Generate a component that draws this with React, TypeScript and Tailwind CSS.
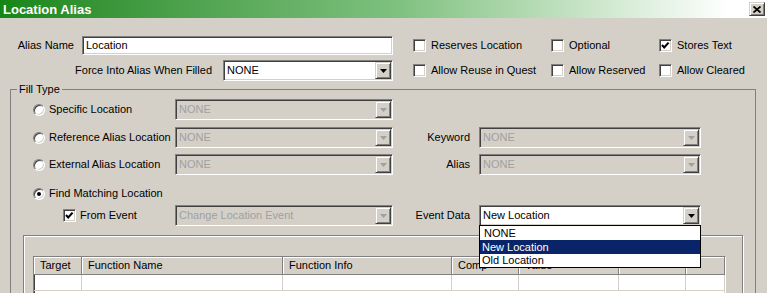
import React from 'react';

const sunken =
  'border border-t-[#808080] border-l-[#808080] border-r-white border-b-white shadow-[inset_1px_1px_0_#404040,inset_-1px_-1px_0_#d4d0c8]';
const raised =
  'border border-t-[#d4d0c8] border-l-[#d4d0c8] border-r-[#404040] border-b-[#404040] shadow-[inset_1px_1px_0_#ffffff,inset_-1px_-1px_0_#808080]';

const Check = ({ checked }: { checked?: boolean }) => (
  <span className={`w-[13px] h-[13px] shrink-0 bg-white flex items-center justify-center ${sunken}`}>
    {checked && (
      <svg width="9" height="9" viewBox="0 0 9 9">
        <polyline points="1,4 3.2,6.4 7.6,1.6" fill="none" stroke="#000" strokeWidth="2.1" />
      </svg>
    )}
  </span>
);

const CheckItem = ({ label, checked, className = '' }: { label: string; checked?: boolean; className?: string }) => (
  <div className={`flex items-center gap-[5px] ${className}`}>
    <Check checked={checked} />
    <span>{label}</span>
  </div>
);

const Radio = ({ checked }: { checked?: boolean }) => (
  <span className="w-[12px] h-[12px] shrink-0 rounded-full bg-white flex items-center justify-center border border-t-[#808080] border-l-[#808080] border-r-white border-b-white shadow-[inset_1px_1px_0_#404040,inset_-1px_-1px_0_#d4d0c8]">
    {checked && <span className="w-[4px] h-[4px] rounded-full bg-black" />}
  </span>
);

const Arrow = ({ disabled }: { disabled?: boolean }) => (
  <div className={`w-[16px] h-full shrink-0 bg-[#d4d0c8] flex items-center justify-center ${raised}`}>
    <svg width="7" height="4" viewBox="0 0 7 4">
      <polygon points="0,0 7,0 3.5,4" fill={disabled ? '#a0a0a0' : '#000'} />
    </svg>
  </div>
);

const Combo = ({ value, disabled, className = '' }: { value: string; disabled?: boolean; className?: string }) => (
  <div className={`flex h-[21px] p-[1px] ${sunken} ${disabled ? 'bg-[#d4d0c8] text-[#a0a0a0]' : 'bg-white'} ${className}`}>
    <div className="flex-1 flex items-center pl-[2px]">{value}</div>
    <Arrow disabled={disabled} />
  </div>
);

const cols = [
  { name: 'Target', w: 'w-[48px]' },
  { name: 'Function Name', w: 'w-[201px]' },
  { name: 'Function Info', w: 'w-[169px]' },
  { name: 'Comp', w: 'w-[67px]' },
  { name: 'Value', w: 'w-[100px]' },
  { name: '', w: 'w-[67px]' },
  { name: '', w: 'flex-1' },
];

export default function App() {
  return (
    <div className="w-[767px] h-[293px] overflow-hidden bg-[#d4d0c8] font-['Liberation_Sans',Arial,sans-serif] text-[11px] leading-none text-black flex flex-col">
      {/* title bar */}
      <div className="h-[18px] shrink-0 flex items-center justify-between pl-[3px] pr-[2px] bg-linear-to-r from-[#138616] via-[#7fc180] via-52% to-white to-95%">
        <span className="text-white font-bold text-[13px]">Location Alias</span>
        <div className={`w-[16px] h-[14px] bg-[#d4d0c8] flex items-center justify-center ${raised}`}>
          <svg width="8" height="7" viewBox="0 0 8 7">
            <path d="M0.5 0.5 L7.5 6.5 M7.5 0.5 L0.5 6.5" stroke="#000" strokeWidth="1.8" />
          </svg>
        </div>
      </div>

      {/* alias name row */}
      <div className="mt-[18px] h-[19px] flex items-center shrink-0">
        <span className="w-[74px] text-right">Alias Name</span>
        <div className={`ml-[8px] w-[311px] h-full bg-white flex items-center pl-[3px] ${sunken}`}>Location</div>
        <CheckItem className="ml-[20px] w-[138px]" label="Reserves Location" />
        <CheckItem className="w-[108px]" label="Optional" />
        <CheckItem label="Stores Text" checked />
      </div>

      {/* force into row */}
      <div className="mt-[5px] h-[21px] flex items-center shrink-0">
        <span className="w-[212px] text-right">Force Into Alias When Filled</span>
        <Combo className="ml-[11px] w-[170px]" value="NONE" />
        <CheckItem className="ml-[20px] w-[138px]" label="Allow Reuse in Quest" />
        <CheckItem className="w-[108px]" label="Allow Reserved" />
        <CheckItem label="Allow Cleared" />
      </div>

      {/* fill type */}
      <fieldset className="mt-[2px] ml-[10px] w-[746px] border border-[#808080] pt-[3px] flex-1">
        <legend className="ml-[6px] px-[2px] h-[13px] leading-[13px]">Fill Type</legend>

        <div className="h-[21px] flex items-center pl-[22px]">
          <div className="w-[142px] flex items-center gap-[4px]">
            <Radio />
            <span>Specific Location</span>
          </div>
          <Combo className="w-[218px]" value="NONE" disabled />
        </div>

        <div className="mt-[7px] h-[21px] flex items-center pl-[22px]">
          <div className="w-[142px] flex items-center gap-[4px]">
            <Radio />
            <span>Reference Alias Location</span>
          </div>
          <Combo className="w-[218px]" value="NONE" disabled />
          <span className="w-[77px] text-right">Keyword</span>
          <Combo className="ml-[9px] w-[222px]" value="NONE" disabled />
        </div>

        <div className="mt-[6px] h-[21px] flex items-center pl-[22px]">
          <div className="w-[142px] flex items-center gap-[4px]">
            <Radio />
            <span>External Alias Location</span>
          </div>
          <Combo className="w-[218px]" value="NONE" disabled />
          <span className="w-[77px] text-right">Alias</span>
          <Combo className="ml-[9px] w-[222px]" value="NONE" disabled />
        </div>

        <div className="mt-[8px] h-[21px] flex items-center pl-[22px] gap-[4px]">
          <Radio checked />
          <span>Find Matching Location</span>
        </div>

        <div className="mt-[1px] h-[21px] flex items-center pl-[52px]">
          <div className="w-[112px] flex items-center gap-[4px]">
            <Check checked />
            <span>From Event</span>
          </div>
          <Combo className="w-[218px]" value="Change Location Event" disabled />
          <span className="w-[77px] text-right">Event Data</span>
          <div className="relative ml-[9px] w-[222px]">
            <Combo value="New Location" />
            <div className="absolute z-10 left-0 top-[20px] w-[222px] bg-white border border-black flex flex-col">
              <span className="h-[14px] flex items-center pl-[4px]">NONE</span>
              <span className="h-[14px] flex items-center pl-[2px] bg-[#0a246a] text-white">New Location</span>
              <span className="h-[13px] flex items-center pl-[2px]">Old Location</span>
            </div>
          </div>
        </div>

        {/* conditions group */}
        <div className="mt-[9px] ml-[12px] w-[720px] h-[80px] border border-[#808080] shadow-[inset_1px_1px_0_#ffffff,1px_1px_0_#ffffff] pt-[20px] pl-[9px]">
          <div className={`w-[693px] h-[60px] bg-white flex flex-col ${sunken}`}>
            <div className="h-[18px] flex shrink-0">
              {cols.map((c, i) => (
                <div
                  key={i}
                  className={`${c.w} h-full bg-[#d4d0c8] flex items-center pl-[6px] border-r border-r-[#808080] border-b border-b-[#808080] shadow-[inset_1px_1px_0_#ffffff]`}
                >
                  {c.name}
                </div>
              ))}
            </div>
            <div className="h-[16px] flex border-b border-[#d4d0c8]">
              {cols.map((c, i) => (
                <div key={i} className={`${c.w} h-full border-r border-[#d4d0c8]`} />
              ))}
            </div>
          </div>
        </div>
      </fieldset>
    </div>
  );
}
